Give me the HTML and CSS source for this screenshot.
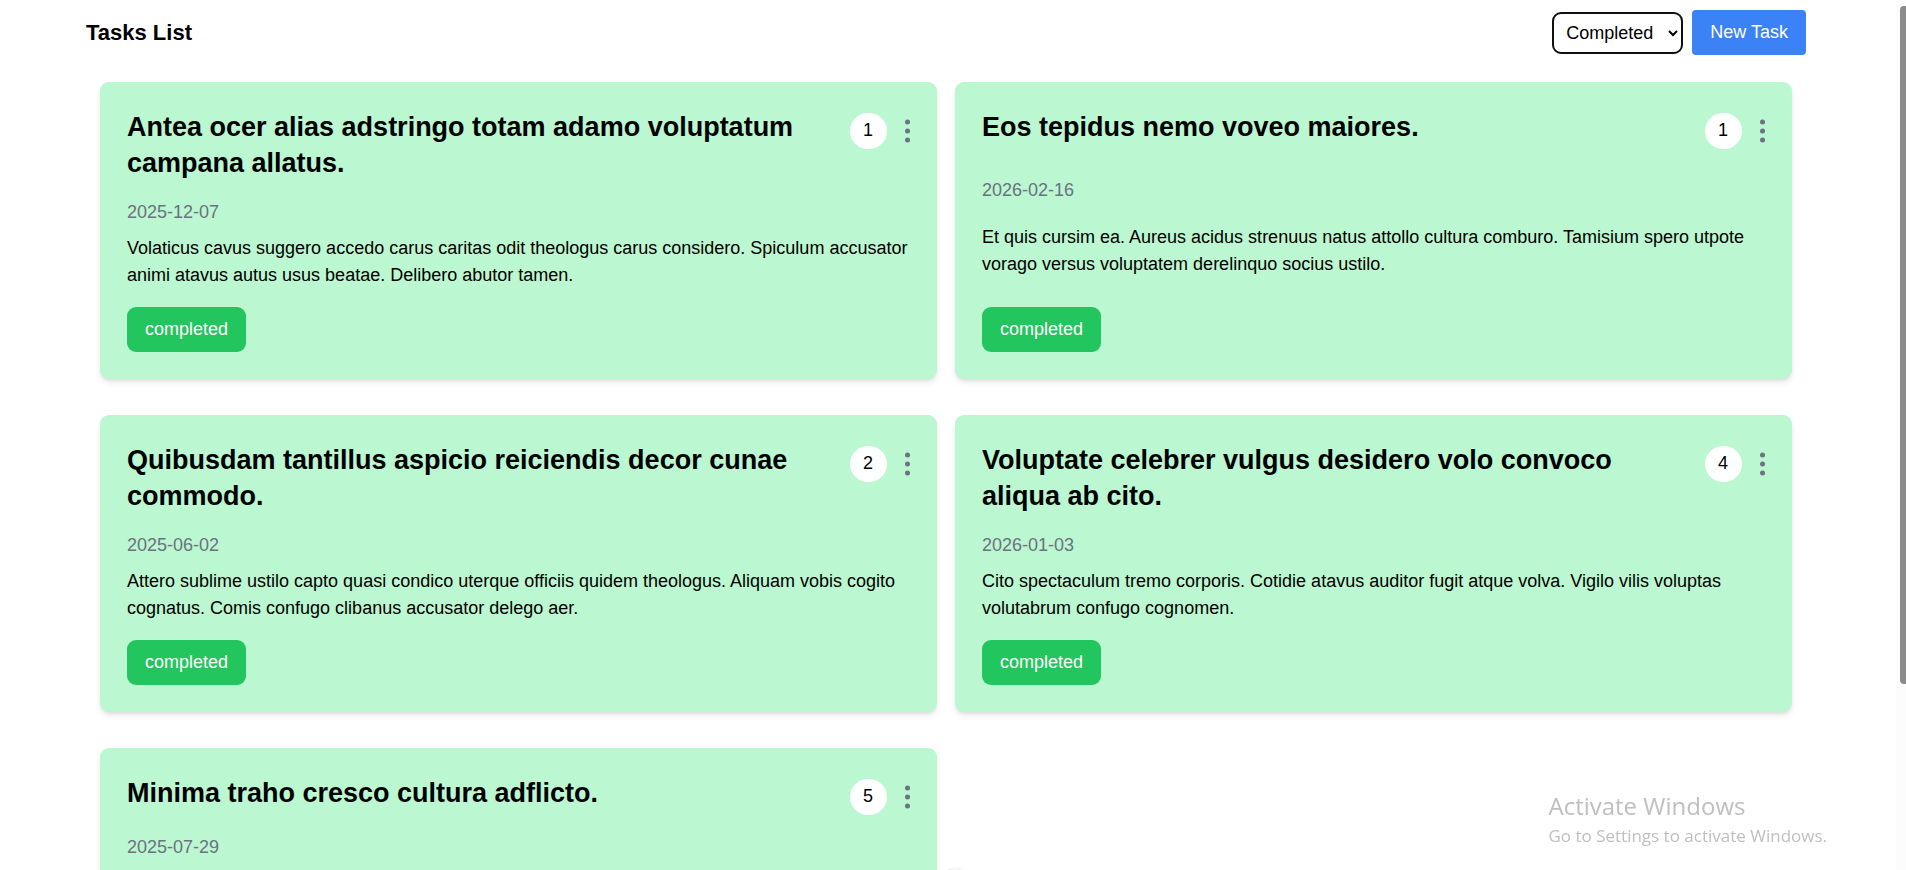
FILE: index.html
```html
<!DOCTYPE html>
<html lang="en">
<head>
<meta charset="utf-8">
<title>Tasks List</title>
<link rel="stylesheet" href="styles.css">
</head>
<body>
<svg class="sprite" aria-hidden="true">
  <symbol id="dots" viewBox="0 0 5 24">
    <circle cx="2.5" cy="3" r="2.5"/><circle cx="2.5" cy="12" r="2.5"/><circle cx="2.5" cy="21" r="2.5"/>
  </symbol>
</svg>
<div class="page">
  <div class="container">
    <header class="toolbar">
      <h1 class="toolbar-title">Tasks List</h1>
      <div class="toolbar-actions">
        <select class="filter" aria-label="Filter by status">
          <option>All</option>
          <option selected>Completed</option>
        </select>
        <button class="new-task" type="button">New Task</button>
      </div>
    </header>
    <main class="tasks">
      <article class="card">
        <div class="card-head">
          <h2 class="card-title">Antea ocer alias adstringo totam adamo voluptatum campana allatus.</h2>
          <div class="card-actions"><span class="count">1</span><button class="menu" type="button" aria-label="Task menu"><svg class="dots"><use href="#dots"/></svg></button></div>
        </div>
        <time class="card-date">2025-12-07</time>
        <p class="card-text">Volaticus cavus suggero accedo carus caritas odit theologus carus considero. Spiculum accusator animi atavus autus usus beatae. Delibero abutor tamen.</p>
        <span class="status">completed</span>
      </article>
      <article class="card">
        <div class="card-head">
          <h2 class="card-title">Eos tepidus nemo voveo maiores.</h2>
          <div class="card-actions"><span class="count">1</span><button class="menu" type="button" aria-label="Task menu"><svg class="dots"><use href="#dots"/></svg></button></div>
        </div>
        <time class="card-date">2026-02-16</time>
        <p class="card-text">Et quis cursim ea. Aureus acidus strenuus natus attollo cultura comburo. Tamisium spero utpote vorago versus voluptatem derelinquo socius ustilo.</p>
        <span class="status">completed</span>
      </article>
      <article class="card">
        <div class="card-head">
          <h2 class="card-title">Quibusdam tantillus aspicio reiciendis decor cunae commodo.</h2>
          <div class="card-actions"><span class="count">2</span><button class="menu" type="button" aria-label="Task menu"><svg class="dots"><use href="#dots"/></svg></button></div>
        </div>
        <time class="card-date">2025-06-02</time>
        <p class="card-text">Attero sublime ustilo capto quasi condico uterque officiis quidem theologus. Aliquam vobis cogito cognatus. Comis confugo clibanus accusator delego aer.</p>
        <span class="status">completed</span>
      </article>
      <article class="card">
        <div class="card-head">
          <h2 class="card-title">Voluptate celebrer vulgus desidero volo convoco aliqua ab cito.</h2>
          <div class="card-actions"><span class="count">4</span><button class="menu" type="button" aria-label="Task menu"><svg class="dots"><use href="#dots"/></svg></button></div>
        </div>
        <time class="card-date">2026-01-03</time>
        <p class="card-text">Cito spectaculum tremo corporis. Cotidie atavus auditor fugit atque volva. Vigilo vilis voluptas volutabrum confugo cognomen.</p>
        <span class="status">completed</span>
      </article>
      <article class="card card-short">
        <div class="card-head">
          <h2 class="card-title">Minima traho cresco cultura adflicto.</h2>
          <div class="card-actions"><span class="count">5</span><button class="menu" type="button" aria-label="Task menu"><svg class="dots"><use href="#dots"/></svg></button></div>
        </div>
        <time class="card-date">2025-07-29</time>
      </article>
    </main>
  </div>
</div>
<div class="bubble"></div>
<div class="scrollbar"><div class="scroll-thumb"></div></div>
<aside class="watermark">
  <p class="watermark-title">Activate Windows</p>
  <p class="watermark-text">Go to Settings to activate Windows.</p>
</aside>
</body>
</html>
```
FILE: styles.css
```css
* { box-sizing: border-box; }
body, h1, h2, p { margin: 0; }
body {
  background: #fff;
  color: #000;
  font: 18px/27px "Liberation Sans", Arial, sans-serif;
}
button, select { font: inherit; }
.sprite { position: absolute; width: 0; height: 0; }
.page {
  height: 100vh;
  overflow-y: auto;
  scrollbar-width: none;
  padding-right: 14px;
}
.container { max-width: 1728px; margin: 0 auto; padding: 10px 4px 0; }
.toolbar { display: flex; justify-content: space-between; align-items: center; }
.toolbar-title { font-size: 22px; line-height: 32px; font-weight: 700; }
.toolbar-actions { display: flex; align-items: center; gap: 9px; }
.filter {
  height: 42px;
  width: 131px;
  padding: 0 0 0 8px;
  border: 2px solid #101010;
  border-radius: 9px;
  background: #fff;
  color: #000;
}
.new-task {
  padding: 9px 18px;
  border: 0;
  border-radius: 4px;
  background: #3b82f6;
  color: #fff;
}
.tasks {
  display: grid;
  grid-template-columns: 1fr 1fr;
  gap: 36px 18px;
  padding: 27px 14px 36px;
}
.card {
  display: flex;
  flex-direction: column;
  justify-content: space-between;
  padding: 27px;
  border-radius: 9px;
  background: #bbf7d0;
  box-shadow: 0 4px 7px -1px rgb(0 0 0 / .1), 0 2px 4px -2px rgb(0 0 0 / .1);
}
.card-head { display: flex; justify-content: space-between; gap: 18px; min-height: 39px; }
.card-short { min-height: 297px; justify-content: flex-start; }
.card-short .card-date { margin-top: 20px; }
.card-title { font-size: 27px; line-height: 36px; font-weight: 700; }
.card-actions { display: flex; align-items: flex-start; gap: 18px; }
.count {
  margin: 4px 0 -4px;
  padding: 4px 14px 5px 13px;
  border-radius: 18px;
  background: #fff;
}
.menu { display: flex; padding: 10px 0 0; border: 0; background: none; }
.dots { width: 5px; height: 24px; fill: #6b7280; }
.card-date { margin-top: 18px; color: #6b7280; }
.card-text { margin-top: 9px; }
.status {
  align-self: flex-start;
  margin-top: 18px;
  padding: 9px 18px;
  border-radius: 9px;
  background: #22c55e;
  color: #fff;
}
.bubble {
  position: fixed;
  left: 50%;
  bottom: -35px;
  width: 36px;
  height: 36px;
  margin-left: -16px;
  border-radius: 50%;
  background: #fff;
  box-shadow: 0 0 2px rgb(0 0 0 / .2);
}
.scrollbar {
  position: fixed;
  inset: 0 0 0 auto;
  width: 10px;
  padding: 6px 0 0 4px;
  background: #fcfcfc;
}
.scroll-thumb { height: 78.5%; border-radius: 4px 0 0 4px; background: #8b8b8b; }
.watermark {
  position: fixed;
  right: 79px;
  bottom: 21px;
  color: #bfbfbf;
  font-family: "Open Sans", "Noto Sans", sans-serif;
  pointer-events: none;
}
.watermark-title { font-size: 24px; line-height: 32px; }
.watermark-text { font-size: 17px; line-height: 27px; }
```
